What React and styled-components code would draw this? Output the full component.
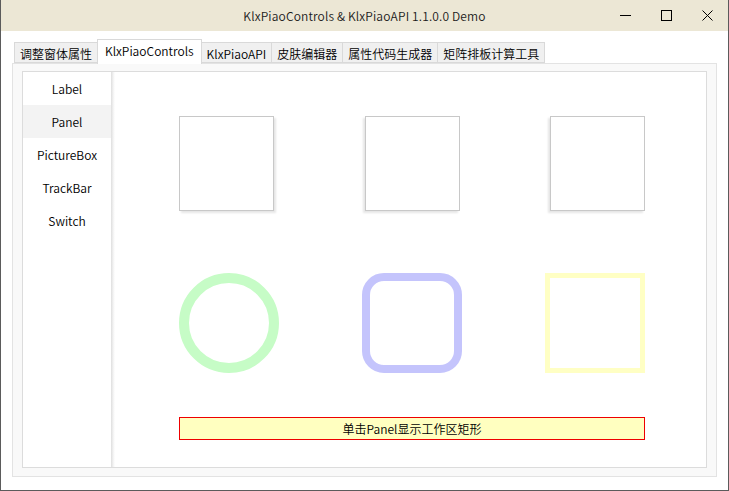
import React from 'react';
import styled, { createGlobalStyle } from 'styled-components';

const Global = createGlobalStyle`
  html, body { margin: 0; padding: 0; background: #ffffff; }
  body { font-family: "Noto Sans CJK SC", "Noto Sans", sans-serif; font-weight: 350; }
`;

const tabs = ['调整窗体属性', 'KlxPiaoControls', 'KlxPiaoAPI', '皮肤编辑器', '属性代码生成器', '矩阵排板计算工具'];
const items = ['Label', 'Panel', 'PictureBox', 'TrackBar', 'Switch'];

const App = () => {
  return (
    <Window>
      <Global />
      <TitleBar>
        <Title>KlxPiaoControls &amp; KlxPiaoAPI 1.1.0.0 Demo</Title>
        <Controls>
          <CtrlButton>
            <svg width="11" height="11" viewBox="0 0 11 11"><path d="M0 5.5h11" stroke="#000" strokeWidth="1" /></svg>
          </CtrlButton>
          <CtrlButton>
            <svg width="11" height="11" viewBox="0 0 11 11"><rect x="0.5" y="0.5" width="10" height="10" fill="none" stroke="#000" strokeWidth="1" /></svg>
          </CtrlButton>
          <CtrlButton>
            <svg width="11" height="11" viewBox="0 0 11 11"><path d="M0.5 0.5l10 10M10.5 0.5l-10 10" stroke="#000" strokeWidth="1" /></svg>
          </CtrlButton>
        </Controls>
      </TitleBar>
      <Body>
        <TabStrip>
          {tabs.map((t, i) => (
            <Tab key={t} active={i === 1}>{t}</Tab>
          ))}
        </TabStrip>
        <Page>
          <Inner>
            <Sidebar>
              {items.map((it) => (
                <Item key={it} active={it === 'Panel'}>{it}</Item>
              ))}
            </Sidebar>
            <Shade />
            <Work>
              <ShapeRow>
                <Card shadow="right" />
                <Card shadow="left" />
                <Card shadow="left" />
              </ShapeRow>
              <ShapeRow>
                <Ring />
                <RoundBox />
                <YellowBox />
              </ShapeRow>
              <Hint>单击Panel显示工作区矩形</Hint>
            </Work>
          </Inner>
        </Page>
      </Body>
    </Window>
  );
};

const Window = styled.div`
  width: 729px;
  height: 491px;
  box-sizing: border-box;
  border: 1px solid #5b5b5b;
  border-top: none;
  display: flex;
  flex-direction: column;
  background: #ffffff;
  overflow: hidden;
`;
const TitleBar = styled.div`
  height: 31px;
  background: #ece7d5;
  position: relative;
  display: flex;
  align-items: center;
  justify-content: center;
`;
const Title = styled.div`
  font-size: 12px;
  color: #1a1a1a;
  letter-spacing: 0.15px;
`;
const Controls = styled.div`
  position: absolute;
  right: 0;
  top: 0;
  height: 31px;
  display: flex;
`;
const CtrlButton = styled.div`
  width: 40px;
  height: 31px;
  display: flex;
  align-items: center;
  justify-content: center;
  margin-left: 1px;
  &:last-child { width: 41px; }
`;
const Body = styled.div`
  flex: 1;
  padding: 8px 11px 13px 11px;
  display: flex;
  flex-direction: column;
`;
const TabStrip = styled.div`
  display: flex;
  align-items: flex-end;
  height: 24px;
  padding-left: 2px;
  position: relative;
  z-index: 1;
`;
const Tab = styled.div`
  box-sizing: border-box;
  font-size: 12px;
  color: #000;
  padding: ${(p) => (p.active ? '0 7px' : '0 5px')};
  height: ${(p) => (p.active ? '25px' : '21px')};
  margin-bottom: ${(p) => (p.active ? '-1px' : '0')};
  line-height: 21px;
  background: ${(p) => (p.active ? '#ffffff' : '#f0f0f0')};
  border: 1px solid #d9d9d9;
  border-bottom: ${(p) => (p.active ? 'none' : '1px solid #d9d9d9')};
  margin-left: -1px;
  white-space: nowrap;
  &:first-child { margin-left: 0; }
`;
const Page = styled.div`
  flex: 1;
  box-sizing: border-box;
  border: 1px solid #e3e3e3;
  background: #f9f9f9;
  padding: 7px 9px 8px 9px;
  display: flex;
`;
const Inner = styled.div`
  flex: 1;
  border: 1px solid #dcdcdc;
  background: #ffffff;
  display: flex;
`;
const Sidebar = styled.div`
  width: 88px;
  display: flex;
  flex-direction: column;
`;
const Item = styled.div`
  height: 33px;
  display: flex;
  align-items: center;
  justify-content: center;
  font-size: 12px;
  color: #000;
  background: ${(p) => (p.active ? '#f3f3f3' : 'transparent')};
`;
const Shade = styled.div`
  width: 4px;
  background: linear-gradient(to right, #dedede, #f4f4f4 60%, #ffffff);
`;
const Work = styled.div`
  flex: 1;
  padding: 44px 61px 0 64px;
  display: flex;
  flex-direction: column;
`;
const ShapeRow = styled.div`
  display: flex;
  justify-content: space-between;
  margin-bottom: 62px;
  &:nth-child(2) { margin-bottom: 44px; }
`;
const Card = styled.div`
  width: 93px;
  height: 93px;
  border: 1px solid #c8c8c8;
  background: #fff;
  box-shadow: ${(p) => (p.shadow === 'right' ? '2px 2px 2px rgba(0,0,0,0.1)' : '-2px 2px 2px rgba(0,0,0,0.1)')};
`;
const Ring = styled.div`
  width: 100px;
  height: 100px;
  box-sizing: border-box;
  border: 10px solid #c6fcc6;
  border-radius: 50%;
`;
const RoundBox = styled.div`
  width: 100px;
  height: 100px;
  box-sizing: border-box;
  border: 8px solid #c4c4fc;
  border-radius: 22px;
`;
const YellowBox = styled.div`
  width: 100px;
  height: 100px;
  box-sizing: border-box;
  border: 5px solid #ffffc4;
`;
const Hint = styled.div`
  height: 23px;
  box-sizing: border-box;
  border: 1px solid #ee0000;
  background: #ffffc0;
  font-size: 12px;
  color: #000;
  display: flex;
  align-items: center;
  justify-content: center;
`;

export default App;
